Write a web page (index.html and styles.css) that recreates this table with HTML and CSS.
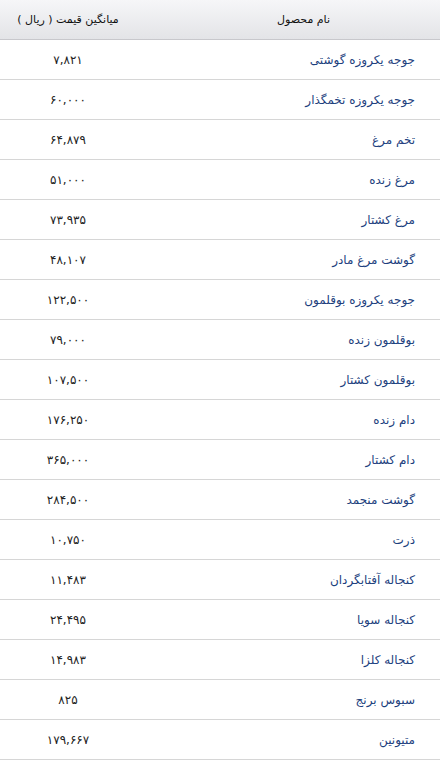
FILE: index.html
```html
<!DOCTYPE html>
<html lang="fa" dir="rtl">
<head>
<meta charset="utf-8">
<link rel="stylesheet" href="styles.css">
</head>
<body>
<div class="table">
  <div class="row head"><div class="name">نام محصول</div><div class="price">میانگین قیمت ( ریال )</div></div>
  <div class="row"><div class="name">جوجه یکروزه گوشتی</div><div class="price">۷,۸۲۱</div></div>
  <div class="row"><div class="name">جوجه یکروزه تخمگذار</div><div class="price">۶۰,۰۰۰</div></div>
  <div class="row"><div class="name">تخم مرغ</div><div class="price">۶۴,۸۷۹</div></div>
  <div class="row"><div class="name">مرغ زنده</div><div class="price">۵۱,۰۰۰</div></div>
  <div class="row"><div class="name">مرغ کشتار</div><div class="price">۷۳,۹۳۵</div></div>
  <div class="row"><div class="name">گوشت مرغ مادر</div><div class="price">۴۸,۱۰۷</div></div>
  <div class="row"><div class="name">جوجه یکروزه بوقلمون</div><div class="price">۱۲۲,۵۰۰</div></div>
  <div class="row"><div class="name">بوقلمون زنده</div><div class="price">۷۹,۰۰۰</div></div>
  <div class="row"><div class="name">بوقلمون کشتار</div><div class="price">۱۰۷,۵۰۰</div></div>
  <div class="row"><div class="name">دام زنده</div><div class="price">۱۷۶,۲۵۰</div></div>
  <div class="row"><div class="name">دام کشتار</div><div class="price">۳۶۵,۰۰۰</div></div>
  <div class="row"><div class="name">گوشت منجمد</div><div class="price">۲۸۴,۵۰۰</div></div>
  <div class="row"><div class="name">ذرت</div><div class="price">۱۰,۷۵۰</div></div>
  <div class="row"><div class="name">کنجاله آفتابگردان</div><div class="price">۱۱,۴۸۳</div></div>
  <div class="row"><div class="name">کنجاله سویا</div><div class="price">۲۴,۴۹۵</div></div>
  <div class="row"><div class="name">کنجاله کلزا</div><div class="price">۱۴,۹۸۳</div></div>
  <div class="row"><div class="name">سبوس برنج</div><div class="price">۸۲۵</div></div>
  <div class="row"><div class="name">متیونین</div><div class="price">۱۷۹,۶۶۷</div></div>
</div>
</body>
</html>
```
FILE: styles.css
```css
html, body {
  margin: 0;
  padding: 0;
  background: #ffffff;
}
body {
  font-family: "DejaVu Sans", sans-serif;
  font-size: 12px;
}
.table {
  display: flex;
  flex-direction: column;
  width: 440px;
}
.row {
  display: grid;
  grid-template-columns: 1fr 136px;
  height: 39px;
  align-items: center;
  border-bottom: 1px solid #d6d6d6;
}
.name {
  padding-right: 25px;
  color: #1d3f7e;
}
.price {
  text-align: center;
  color: #222222;
}
.head {
  background: linear-gradient(#f6f6f8, #e3e4e7);
  border-bottom-color: #c8c8cc;
  font-size: 11px;
}
.head .name {
  padding-right: 110px;
  color: #111111;
}
.head .price {
  color: #111111;
}
```
